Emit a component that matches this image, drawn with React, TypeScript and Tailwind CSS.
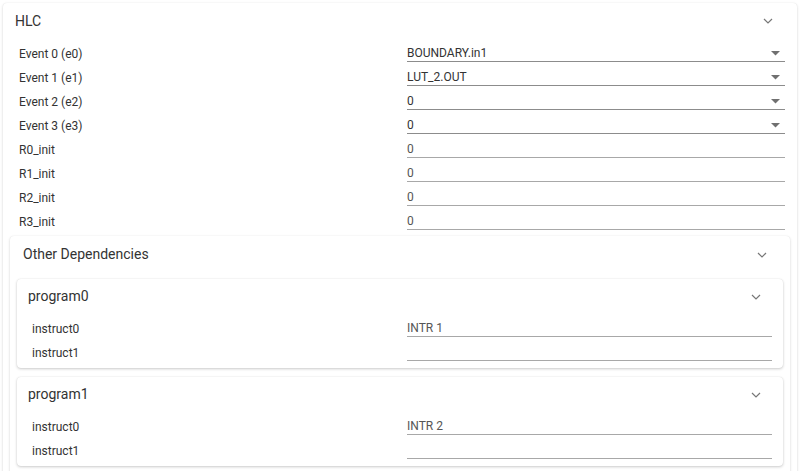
import React from "react";

type Field = { label: string; value: string; select?: boolean };

const hlcFields: Field[] = [
  { label: "Event 0 (e0)", value: "BOUNDARY.in1", select: true },
  { label: "Event 1 (e1)", value: "LUT_2.OUT", select: true },
  { label: "Event 2 (e2)", value: "0", select: true },
  { label: "Event 3 (e3)", value: "0", select: true },
  { label: "R0_init", value: "0" },
  { label: "R1_init", value: "0" },
  { label: "R2_init", value: "0" },
  { label: "R3_init", value: "0" },
];

const programs = [
  { name: "program0", instr: ["INTR 1", ""] },
  { name: "program1", instr: ["INTR 2", ""] },
];

function Chevron() {
  return (
    <svg width="10" height="6" viewBox="0 0 10 6" className="shrink-0">
      <polyline points="1,1 5,5 9,1" fill="none" stroke="#777" strokeWidth="1.2" />
    </svg>
  );
}

function Caret() {
  return (
    <svg width="9" height="5" viewBox="0 0 9 5" className="shrink-0">
      <polygon points="0,0 9,0 4.5,4.5" fill="#707070" />
    </svg>
  );
}

function Row({ field, labelPad, labelWidth }: { field: Field; labelPad: string; labelWidth: string }) {
  return (
    <div className="flex items-end h-6">
      <div className={`${labelPad} ${labelWidth} shrink-0 h-5 pt-[4px] leading-4 text-[12px] text-[#333]`}>
        {field.label}
      </div>
      <div
        className={`flex-1 h-5 pt-[3px] flex items-start justify-between border-b ${
          field.select ? "border-[#8c8c8c]" : "border-[#a8a8a8]"
        }`}
      >
        <span className={`text-[12px] leading-4 ${field.select ? "text-[#333]" : "text-[#555]"}`}>
          {field.value}
        </span>
        {field.select && (
          <span className="mr-[5px] mt-[6px]">
            <Caret />
          </span>
        )}
      </div>
    </div>
  );
}

export default function App() {
  return (
    <div className="w-[800px] h-[471px] overflow-hidden bg-white font-['Roboto',sans-serif] pt-[3px] px-[3px]">
      <div className="rounded-[4px] bg-white shadow-[0_1px_3px_rgba(0,0,0,0.16),0_0_1px_rgba(0,0,0,0.1)] pb-4">
        <div className="h-[35px] pt-px flex items-center justify-between pl-3 pr-6">
          <span className="text-[14px] text-[#333]">HLC</span>
          <Chevron />
        </div>
        <div className="pr-3">
          {hlcFields.map((f) => (
            <Row key={f.label} field={f} labelPad="pl-4" labelWidth="w-[404px]" />
          ))}
        </div>

        <div className="mx-[7px] mt-[6px] rounded-[4px] bg-white shadow-[0_1px_3px_rgba(0,0,0,0.16),0_0_1px_rgba(0,0,0,0.1)] pb-4">
          <div className="h-9 pt-px flex items-center justify-between pl-[13px] pr-[23px]">
            <span className="text-[14px] text-[#333]">Other Dependencies</span>
            <Chevron />
          </div>
          <div className="px-[7px] pt-[7px] flex flex-col gap-[9px]">
            {programs.map((p) => (
              <div
                key={p.name}
                className="rounded-[4px] bg-white shadow-[0_1px_3px_rgba(0,0,0,0.2),0_0_1px_rgba(0,0,0,0.12)] pb-[7px]"
              >
                <div className="h-[34px] pt-px flex items-center justify-between pl-[11px] pr-[22px]">
                  <span className="text-[14px] text-[#333]">{p.name}</span>
                  <Chevron />
                </div>
                <div className="pr-[11px]">
                  {p.instr.map((v, i) => (
                    <Row
                      key={i}
                      field={{ label: `instruct${i}`, value: v }}
                      labelPad="pl-[15px]"
                      labelWidth="w-[390px]"
                    />
                  ))}
                </div>
              </div>
            ))}
          </div>
        </div>
      </div>
    </div>
  );
}
